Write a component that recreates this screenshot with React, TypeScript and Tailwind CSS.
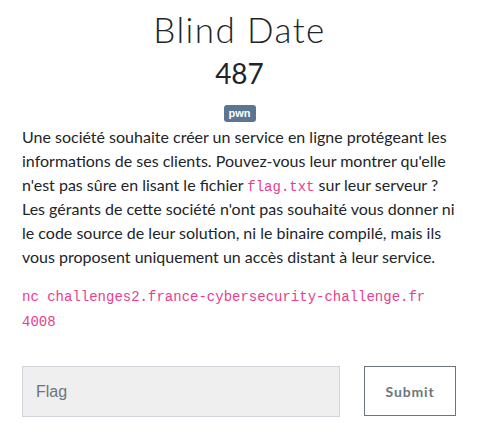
import React from 'react';

const App: React.FC = () => {
  return (
    <div className="min-h-screen bg-white font-['Lato',sans-serif] text-[#212529]">
      <div className="px-[22px] pt-[8px]">
        {/* Header */}
        <div className="flex flex-col items-center">
          <h1 className="text-[35px] leading-[43px] font-light tracking-[0.04em] text-[#212529]">Blind Date</h1>
          <h2 className="mt-[5px] text-[28px] leading-[34px] font-normal">487</h2>
          <span className="mt-[15px] rounded-[3px] bg-[#5c7592] px-[5px] pt-[2px] pb-[3px] text-[11px] leading-[12px] font-bold text-white font-['Liberation_Sans',sans-serif]">
            pwn
          </span>
        </div>

        {/* Description */}
        <div className="mt-[3px] text-[16px] leading-[24px]">
          <p>
            Une société souhaite créer un service en ligne protégeant les informations de ses clients. Pouvez-vous leur
            montrer qu'elle n'est pas sûre en lisant le fichier{' '}
            <code className="font-['Liberation_Mono',monospace] text-[14px] leading-[16px] text-[#e83e8c]">flag.txt</code> sur leur
            serveur ? Les gérants de cette société n'ont pas souhaité vous donner ni le code source de leur solution, ni le
            binaire compilé, mais ils vous proposent uniquement un accès distant à leur service.
          </p>
          <p className="mt-[16px] font-['Liberation_Mono',monospace] text-[14px] leading-[25px] text-[#e83e8c]">
            nc challenges2.france-cybersecurity-challenge.fr 4008
          </p>
        </div>

        {/* Submit row */}
        <div className="mt-[31px] flex items-start gap-[24px]">
          <input
            placeholder="Flag"
            className="h-[51px] w-[318px] border border-[#ced4da] bg-[#efefef] px-[13px] font-['Liberation_Sans',sans-serif] text-[16px] placeholder:text-[#6c757d] outline-none"
          />
          <button className="h-[50px] w-[92px] border border-[#6c757d] bg-white text-[14px] font-bold tracking-[0.06em] text-[#6c757d]">
            Submit
          </button>
        </div>
      </div>
    </div>
  );
};

export default App;
